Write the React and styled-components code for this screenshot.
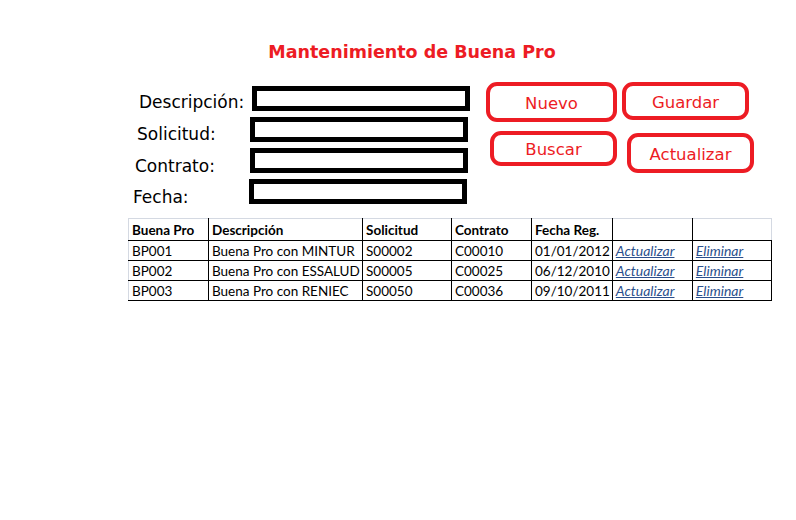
import React from 'react'
import styled, { createGlobalStyle } from 'styled-components'

const GlobalStyle = createGlobalStyle`
    body {
        margin: 0;
        background: #ffffff;
    }
`

const Page = styled.div`
    width: 796px;
    height: 520px;
    background: #ffffff;
    padding-top: 38px;
    box-sizing: border-box;
    font-family: "Comic Sans MS", "DejaVu Sans", sans-serif;
`

const Title = styled.h1`
    margin: 0;
    padding-left: 28px;
    text-align: center;
    font-size: 17.5px;
    font-weight: 700;
    color: #ed1c24;
    line-height: 28px;
`

const FormArea = styled.div`
    display: flex;
    align-items: flex-start;
    margin: 20px 0 0 133px;
`

const Fields = styled.div`
    display: grid;
    grid-template-columns: 117px 220px;
    grid-auto-rows: 25px;
    row-gap: 6px;
    align-items: center;
`

const Label = styled.label`
    padding-left: ${props => props.indent || 0}px;
    font-size: 17px;
    color: #000000;
    white-space: nowrap;
    margin-top: ${props => props.drop || 0}px;
`

const Input = styled.div`
    box-sizing: border-box;
    height: 25px;
    width: 218px;
    margin-left: ${props => props.shift || 0}px;
    border: 5px solid #000000;
    background: #ffffff;
`

const Buttons = styled.div`
    display: grid;
    grid-template-columns: 136px 132px;
    grid-template-rows: 49px 42px;
    margin: -4px 0 0 16px;
`

const Button = styled.button`
    box-sizing: border-box;
    width: ${props => props.w}px;
    height: ${props => props.h}px;
    margin-left: ${props => props.dx || 0}px;
    margin-top: ${props => props.dy || 0}px;
    border: 4px solid #ed1c24;
    border-radius: 11px;
    background: #ffffff;
    color: #ed1c24;
    font-family: "Comic Sans MS", "DejaVu Sans", sans-serif;
    font-size: 16.5px;
    padding: 2px 0 0 0;
    cursor: pointer;
`

const Sheet = styled.table`
    margin: 14px 0 0 128px;
    border-collapse: collapse;
    table-layout: fixed;
    font-family: "Lato", "Open Sans", sans-serif;
    font-size: 13.5px;
    color: #000000;
`

const Col = styled.col`
    width: ${props => props.w}px;
`

const Head = styled.th`
    height: 21px;
    padding: 0 0 0 3px;
    text-align: left;
    font-weight: 700;
    border-top: 1px solid #d4d9e2;
    border-bottom: 1px solid #000000;
    border-left: 1px solid ${props => props.soft ? '#d4d9e2' : '#000000'};
    border-right: 1px solid ${props => props.soft ? '#d4d9e2' : '#000000'};
    white-space: nowrap;
    overflow: hidden;
    &:first-child {
        border-left-color: #d4d9e2;
    }
`

const Cell = styled.td`
    height: 19px;
    padding: 0 ${props => props.right ? 2 : 0}px 0 3px;
    text-align: ${props => props.right ? 'right' : 'left'};
    border: 1px solid #000000;
    white-space: nowrap;
    overflow: hidden;
    &:first-child {
        border-left-color: #d4d9e2;
    }
`

const Link = styled.a`
    color: #2a4f8d;
    font-size: 14px;
    font-style: italic;
    text-decoration: underline;
    cursor: pointer;
`

const rows = [
    { id: 'BP001', desc: 'Buena Pro con MINTUR', sol: 'S00002', con: 'C00010', fecha: '01/01/2012' },
    { id: 'BP002', desc: 'Buena Pro con ESSALUD', sol: 'S00005', con: 'C00025', fecha: '06/12/2010' },
    { id: 'BP003', desc: 'Buena Pro con RENIEC', sol: 'S00050', con: 'C00036', fecha: '09/10/2011' },
]

export default function App() {
    return (
        <>
            <GlobalStyle />
            <Page>
                <Title>Mantenimiento de Buena Pro</Title>

                <FormArea>
                    <Fields>
                        <Label indent={6} drop={6}>Descripción:</Label>
                        <Input shift={2} />
                        <Label indent={4} drop={8}>Solicitud:</Label>
                        <Input />
                        <Label indent={2} drop={10}>Contrato:</Label>
                        <Input />
                        <Label drop={10}>Fecha:</Label>
                        <Input shift={-1} />
                    </Fields>

                    <Buttons>
                        <Button w={131} h={40}>Nuevo</Button>
                        <Button w={127} h={38}>Guardar</Button>
                        <Button w={127} h={35} dx={4}>Buscar</Button>
                        <Button w={127} h={40} dx={5} dy={2}>Actualizar</Button>
                    </Buttons>
                </FormArea>

                <Sheet>
                    <colgroup>
                        <Col w={80} />
                        <Col w={154} />
                        <Col w={89} />
                        <Col w={80} />
                        <Col w={80} />
                        <Col w={80} />
                        <Col w={79} />
                    </colgroup>
                    <thead>
                        <tr>
                            <Head>Buena Pro</Head>
                            <Head>Descripción</Head>
                            <Head>Solicitud</Head>
                            <Head>Contrato</Head>
                            <Head>Fecha Reg.</Head>
                            <Head></Head>
                            <Head soft></Head>
                        </tr>
                    </thead>
                    <tbody>
                        {rows.map(r => (
                            <tr key={r.id}>
                                <Cell>{r.id}</Cell>
                                <Cell>{r.desc}</Cell>
                                <Cell>{r.sol}</Cell>
                                <Cell>{r.con}</Cell>
                                <Cell right>{r.fecha}</Cell>
                                <Cell><Link>Actualizar</Link></Cell>
                                <Cell><Link>Eliminar</Link></Cell>
                            </tr>
                        ))}
                    </tbody>
                </Sheet>
            </Page>
        </>
    )
}
